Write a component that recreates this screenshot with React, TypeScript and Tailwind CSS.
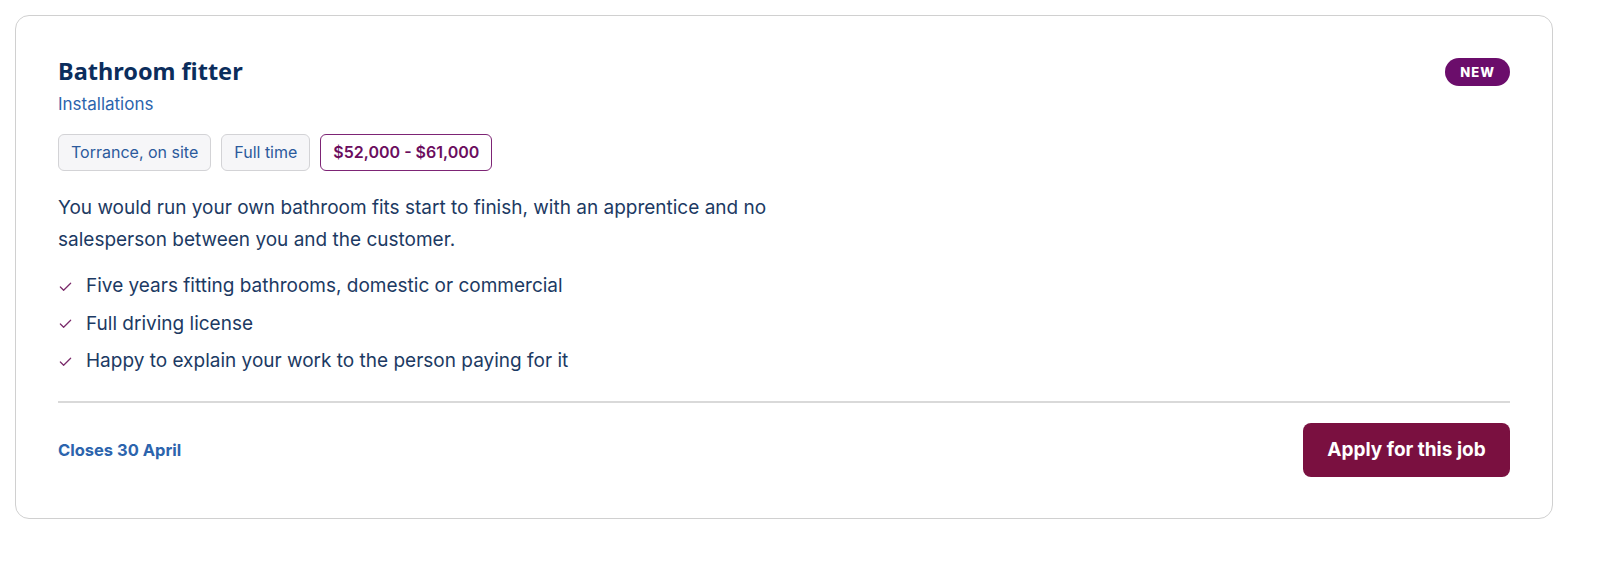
import React from "react";

const Check = () => (
  <svg width="15" height="15" viewBox="0 0 16 16" fill="none" className="shrink-0">
    <path d="M2.5 8.5 L6 12 L13.5 4.5" stroke="#7a2a6a" strokeWidth="1.3" strokeLinecap="round" strokeLinejoin="round" />
  </svg>
);

export default function App() {
  const items = [
    "Five years fitting bathrooms, domestic or commercial",
    "Full driving license",
    "Happy to explain your work to the person paying for it",
  ];
  return (
    <div className="w-[1600px] h-[576px] bg-white" style={{ fontFamily: "Inter, 'Liberation Sans', sans-serif" }}>
      <div className="ml-[15px] mt-[15px] w-[1538px] rounded-[14px] border border-[#d0d0d0] bg-white px-[42px] pt-[40px] pb-[41px]">
        <div className="flex items-start justify-between">
          <div>
            <h2 className="text-[23.5px] leading-[30px] font-bold text-[#0b2d5c]" style={{ fontFamily: "'Noto Sans', sans-serif" }}>
              Bathroom fitter
            </h2>
            <div className="mt-[6px] text-[17px] leading-[24px] text-[#2c64ad]">Installations</div>
          </div>
          <span className="mt-[2px] rounded-full bg-[#6b0d6b] px-[15px] py-[6px] text-[13px] leading-[16px] font-extrabold tracking-[1px] text-white">
            NEW
          </span>
        </div>
        <div className="mt-[18px] flex gap-[10px]">
          <span className="rounded-[6px] border border-[#d3d3d6] bg-[#f6f6f8] px-[12px] py-[7px] text-[16px] leading-[21px] text-[#2b5a9c]">
            Torrance, on site
          </span>
          <span className="rounded-[6px] border border-[#d3d3d6] bg-[#f6f6f8] px-[12px] py-[7px] text-[16px] leading-[21px] text-[#2b5a9c]">
            Full time
          </span>
          <span className="rounded-[6px] border border-[#7d2475] bg-white px-[12px] py-[7px] text-[16px] leading-[21px] font-semibold text-[#6b0d5e]">
            $52,000 - $61,000
          </span>
        </div>
        <p className="mt-[21px] max-w-[760px] text-[19px] leading-[32px] text-[#1c3a63]">
          You would run your own bathroom fits start to finish, with an apprentice and no salesperson between you and the customer.
        </p>
        <ul className="mt-[16px] flex flex-col gap-[9.5px]">
          {items.map((t) => (
            <li key={t} className="flex items-center gap-[13px] text-[19px] leading-[28px] text-[#1c3a63]">
              <Check />
              {t}
            </li>
          ))}
        </ul>
        <div className="mt-[26px] h-[2px] bg-[#d9d9d9]" />
        <div className="mt-[20px] flex items-center justify-between">
          <span className="text-[16.5px] font-bold text-[#2c64ad]">Closes 30 April</span>
          <button className="h-[54px] w-[207px] rounded-[8px] bg-[#7a1040] text-[19px] font-bold text-white">
            Apply for this job
          </button>
        </div>
      </div>
    </div>
  );
}
